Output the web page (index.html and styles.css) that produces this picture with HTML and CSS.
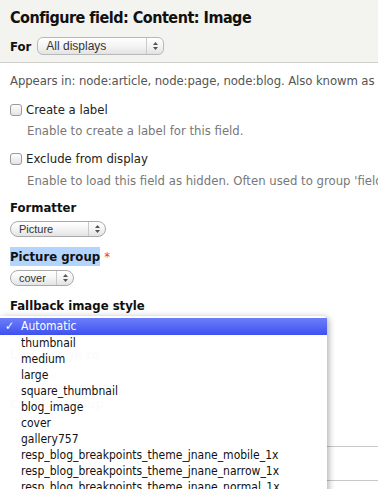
FILE: index.html
```html
<!DOCTYPE html>
<html>
<head>
<meta charset="utf-8">
<link rel="stylesheet" href="styles.css">
</head>
<body>
<div class="page">
  <div class="header">
    <h1 class="title">Configure field: Content: Image</h1>
    <div class="for-row">
      <span class="for-label">For</span>
      <div class="select select-for"><span class="select-text">All displays</span><span class="select-arrows"><svg width="7" height="10" viewBox="0 0 7 10"><path d="M3.5 1 L6 4 H1 Z M3.5 9 L6 6 H1 Z" fill="#555"/></svg></span></div>
    </div>
  </div>
  <div class="body">
    <p class="appears">Appears in: node:article, node:page, node:blog. Also knowm as</p>
    <div class="check-row"><span class="checkbox"></span><span>Create a label</span></div>
    <p class="desc">Enable to create a label for this field.</p>
    <div class="check-row gap2"><span class="checkbox"></span><span>Exclude from display</span></div>
    <p class="desc">Enable to load this field as hidden. Often used to group 'fields</p>

    <div class="label l-formatter">Formatter</div>
    <div class="select select-picture"><span class="select-text">Picture</span><span class="select-arrows"><svg width="7" height="10" viewBox="0 0 7 10"><path d="M3.5 1 L6 4 H1 Z M3.5 9 L6 6 H1 Z" fill="#555"/></svg></span></div>

    <div class="label l-group"><span class="hl">Picture group</span> <span class="req">*</span></div>
    <div class="select select-cover"><span class="select-text">cover</span><span class="select-arrows"><svg width="7" height="10" viewBox="0 0 7 10"><path d="M3.5 1 L6 4 H1 Z M3.5 9 L6 6 H1 Z" fill="#555"/></svg></span></div>

    <div class="label l-fallback">Fallback image style</div>
    <div class="select select-auto"><span class="select-text">Automatic</span><span class="select-arrows"></span></div>

    <div class="label l-link">Link image to</div>
    <div class="select select-nothing"><span class="select-text">Nothing</span><span class="select-arrows"></span></div>

    <div class="label l-caption">Caption group</div>
    <div class="select select-none"><span class="select-text">None</span><span class="select-arrows"></span></div>

    <div class="rule r1"></div>
    <div class="rule r2"></div>
  </div>

  <ul class="menu">
    <li class="item selected"><span class="tick">✓</span>Automatic</li>
    <li class="item">thumbnail</li>
    <li class="item">medium</li>
    <li class="item">large</li>
    <li class="item">square_thumbnail</li>
    <li class="item">blog_image</li>
    <li class="item">cover</li>
    <li class="item">gallery757</li>
    <li class="item">resp_blog_breakpoints_theme_jnane_mobile_1x</li>
    <li class="item">resp_blog_breakpoints_theme_jnane_narrow_1x</li>
    <li class="item">resp_blog_breakpoints_theme_jnane_normal_1x</li>
  </ul>
</div>
</body>
</html>
```
FILE: styles.css
```css
html, body {
  margin: 0;
  padding: 0;
  background: #fff;
}
.page {
  position: relative;
  width: 378px;
  height: 489px;
  overflow: hidden;
  font-family: "DejaVu Sans", "Liberation Sans", sans-serif;
  font-stretch: condensed;
  font-size: 12px;
  color: #222;
}
.header {
  background: #f3f3ef;
  border-bottom: 1px solid #cfcfcb;
  padding: 8px 10px 7px;
}
.title {
  margin: 0;
  font-size: 16px;
  line-height: 19px;
  letter-spacing: -0.5px;
  font-weight: bold;
  color: #111;
}
.for-row {
  margin-top: 10px;
  display: flex;
  align-items: center;
  height: 18px;
}
.for-label {
  font-weight: bold;
  font-size: 13px;
  margin-right: 6px;
  color: #111;
}
.select {
  box-sizing: border-box;
  display: flex;
  align-items: center;
  height: 16px;
  border: 1px solid #a9a9a9;
  border-radius: 8px;
  background: linear-gradient(#ffffff, #f4f4f4 50%, #e3e3e3);
  box-shadow: inset 0 1px 0 #fff;
  font-family: "Liberation Sans", sans-serif;
  font-stretch: normal;
  font-size: 11px;
  color: #333;
}
.select-text {
  flex: 1;
  padding-left: 8px;
  line-height: 14px;
}
.select-arrows {
  width: 16px;
  height: 100%;
  border-left: 1px solid #c9c9c9;
  display: flex;
  align-items: center;
  justify-content: center;
}
.select-for {
  width: 127px;
  height: 18px;
  border-radius: 6px;
  font-size: 12px;
  border-color: #b8b8b8;
}
.select-picture { width: 96px; }
.select-cover { width: 64px; }
.select-auto { width: 110px; }
.select-nothing { width: 80px; }
.select-none { width: 70px; }

.body {
  padding: 0 10px;
}
.body p { margin: 0; }
.appears {
  margin-top: 10px !important;
  line-height: 16px;
  font-size: 13px;
  letter-spacing: -0.1px;
  color: #555;
  white-space: nowrap;
}
.check-row {
  display: flex;
  align-items: center;
  gap: 4px;
  margin-top: 13px;
  line-height: 16px;
  font-size: 13px;
  color: #222;
}
.check-row.gap2 { margin-top: 12px; }
.checkbox {
  box-sizing: border-box;
  width: 12px;
  height: 12px;
  border: 1px solid #9a9a9a;
  border-radius: 3px;
  background: linear-gradient(#fdfdfd, #e4e4e4);
}
.desc {
  margin-top: 5px !important;
  padding-left: 17px;
  line-height: 16px;
  font-size: 13px;
  color: #777;
  white-space: nowrap;
}
.check-row.gap2 + .desc { margin-top: 6px !important; }
.label {
  font-weight: bold;
  font-size: 13px;
  line-height: 16px;
  color: #111;
  margin-bottom: 5px;
}
.l-formatter { margin-top: 11px; }
.l-group { margin-top: 12px; }
.l-fallback { margin-top: 12px; }
.l-link { margin-top: 12px; }
.l-caption { margin-top: 12px; }
.hl {
  background: #b3d4fd;
  padding: 2px 0;
}
.req { color: #e33; font-weight: normal; }
.rule {
  height: 1px;
  background: #c8c8c8;
  margin-left: -10px;
  margin-right: -10px;
}
.r1 { margin-top: 13px; }
.r2 { margin-top: 33px; }

.menu {
  position: absolute;
  left: 0;
  top: 316px;
  width: 327px;
  height: 200px;
  margin: 0;
  padding: 2px 0 0;
  list-style: none;
  background: rgba(255, 255, 255, 0.985);
  border-top-right-radius: 5px;
  box-shadow: 2px 1px 6px rgba(0, 0, 0, 0.3);
}
.item {
  position: relative;
  height: 16px;
  line-height: 16px;
  padding-left: 21px;
  font-size: 12px;
  color: #111;
  white-space: nowrap;
}
.item.selected {
  height: 17px;
  line-height: 17px;
  background: linear-gradient(#6d7ef8, #3e51f1);
  color: #fff;
}
.tick {
  position: absolute;
  left: 5px;
  top: 0;
  font-weight: bold;
}
```
